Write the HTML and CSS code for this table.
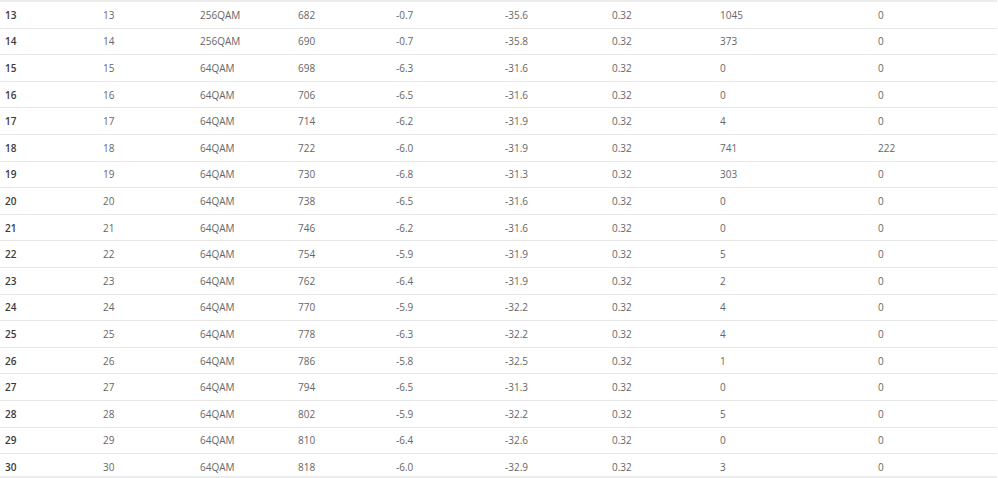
FILE: index.html
```html
<!DOCTYPE html>
<html>
<head>
<meta charset="utf-8">
<link rel="stylesheet" href="styles.css">
</head>
<body>
<div class="wrap">
<table class="grid">
<colgroup>
<col class="c1"><col class="c2"><col class="c3"><col class="c4"><col class="c5"><col class="c6"><col class="c7"><col class="c8"><col class="c9">
</colgroup>
<tbody>
<tr><th>13</th><td>13</td><td>256QAM</td><td>682</td><td>-0.7</td><td>-35.6</td><td>0.32</td><td>1045</td><td>0</td></tr>
<tr><th>14</th><td>14</td><td>256QAM</td><td>690</td><td>-0.7</td><td>-35.8</td><td>0.32</td><td>373</td><td>0</td></tr>
<tr><th>15</th><td>15</td><td>64QAM</td><td>698</td><td>-6.3</td><td>-31.6</td><td>0.32</td><td>0</td><td>0</td></tr>
<tr><th>16</th><td>16</td><td>64QAM</td><td>706</td><td>-6.5</td><td>-31.6</td><td>0.32</td><td>0</td><td>0</td></tr>
<tr><th>17</th><td>17</td><td>64QAM</td><td>714</td><td>-6.2</td><td>-31.9</td><td>0.32</td><td>4</td><td>0</td></tr>
<tr><th>18</th><td>18</td><td>64QAM</td><td>722</td><td>-6.0</td><td>-31.9</td><td>0.32</td><td>741</td><td>222</td></tr>
<tr><th>19</th><td>19</td><td>64QAM</td><td>730</td><td>-6.8</td><td>-31.3</td><td>0.32</td><td>303</td><td>0</td></tr>
<tr><th>20</th><td>20</td><td>64QAM</td><td>738</td><td>-6.5</td><td>-31.6</td><td>0.32</td><td>0</td><td>0</td></tr>
<tr><th>21</th><td>21</td><td>64QAM</td><td>746</td><td>-6.2</td><td>-31.6</td><td>0.32</td><td>0</td><td>0</td></tr>
<tr><th>22</th><td>22</td><td>64QAM</td><td>754</td><td>-5.9</td><td>-31.9</td><td>0.32</td><td>5</td><td>0</td></tr>
<tr><th>23</th><td>23</td><td>64QAM</td><td>762</td><td>-6.4</td><td>-31.9</td><td>0.32</td><td>2</td><td>0</td></tr>
<tr><th>24</th><td>24</td><td>64QAM</td><td>770</td><td>-5.9</td><td>-32.2</td><td>0.32</td><td>4</td><td>0</td></tr>
<tr><th>25</th><td>25</td><td>64QAM</td><td>778</td><td>-6.3</td><td>-32.2</td><td>0.32</td><td>4</td><td>0</td></tr>
<tr><th>26</th><td>26</td><td>64QAM</td><td>786</td><td>-5.8</td><td>-32.5</td><td>0.32</td><td>1</td><td>0</td></tr>
<tr><th>27</th><td>27</td><td>64QAM</td><td>794</td><td>-6.5</td><td>-31.3</td><td>0.32</td><td>0</td><td>0</td></tr>
<tr><th>28</th><td>28</td><td>64QAM</td><td>802</td><td>-5.9</td><td>-32.2</td><td>0.32</td><td>5</td><td>0</td></tr>
<tr><th>29</th><td>29</td><td>64QAM</td><td>810</td><td>-6.4</td><td>-32.6</td><td>0.32</td><td>0</td><td>0</td></tr>
<tr><th>30</th><td>30</td><td>64QAM</td><td>818</td><td>-6.0</td><td>-32.9</td><td>0.32</td><td>3</td><td>0</td></tr>
</tbody>
</table>
</div>
</body>
</html>
```
FILE: styles.css
```css
html, body {
  margin: 0;
  padding: 0;
  background: #ffffff;
}
.wrap {
  width: 997px;
  height: 476px;
  overflow: hidden;
  border-bottom: 2px solid #ececec;
}
.grid {
  width: 997px;
  border-collapse: collapse;
  table-layout: fixed;
  font-family: "Open Sans", "Noto Sans", sans-serif;
  font-size: 10px;
  color: #666666;
  border-top: 2px solid #ececec;
}
.c1 { width: 99px; }
.c2 { width: 96px; }
.c3 { width: 98px; }
.c4 { width: 98px; }
.c5 { width: 109px; }
.c6 { width: 107px; }
.c7 { width: 108px; }
.c8 { width: 158px; }
.grid th, .grid td {
  height: 25.6px;
  padding: 0 0 0 5px;
  text-align: left;
  vertical-align: middle;
  border-bottom: 1px solid #e6e6e6;
  white-space: nowrap;
}
.grid td:nth-child(2) { padding-left: 4px; }
.grid th {
  font-weight: 600;
  color: #3a3a3a;
}
.grid tr:last-child th, .grid tr:last-child td {
  border-bottom: none;
}
```
